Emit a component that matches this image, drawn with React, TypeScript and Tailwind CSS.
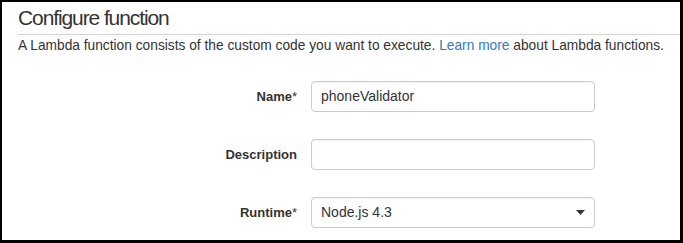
const fields = [
  { label: "Name", required: true, value: "phoneValidator", kind: "input" },
  { label: "Description", required: false, value: "", kind: "input" },
  { label: "Runtime", required: true, value: "Node.js 4.3", kind: "select" },
];

function Caret() {
  return (
    <svg width="9" height="5" viewBox="0 0 9 5" className="shrink-0">
      <path d="M0 0h9L4.5 5z" fill="#333" />
    </svg>
  );
}

export default function App() {
  return (
    <div className="h-[243px] w-[683px] bg-black pt-[2px] pl-[2px] pr-[3px] pb-[3px] font-['Liberation_Sans',Arial,sans-serif] text-[#333]">
      <div className="h-full bg-white pl-[16px]">
        <h1 className="border-b border-[#d5d5d5] pt-[3px] pb-[4px] text-[21px] leading-[25px] font-normal tracking-[-1.1px] text-[#333]">
          Configure function
        </h1>
        <p className="pt-[2px] text-[13.75px] leading-[18px] whitespace-nowrap">
          A Lambda function consists of the custom code you want to execute.{" "}
          <span className="text-[#337ab7]">Learn more</span> about Lambda functions.
        </p>

        <div className="mt-[26px] grid grid-cols-[279px_284px] gap-x-[14px] gap-y-[27px]">
          {fields.map((f) => (
            <div key={f.label} className="contents">
              <div className="flex h-[31px] items-center justify-end text-[13px] font-bold text-[#333]">
                {f.label}
                {f.required && <span className="font-normal">*</span>}
              </div>
              <div className="flex h-[31px] items-center justify-between rounded-[4px] border border-[#ccc] bg-white pl-[9px] pr-[9px] text-[14px] text-[#333] shadow-[inset_0_1px_1px_rgba(0,0,0,0.05)]">
                <span>{f.value}</span>
                {f.kind === "select" && <Caret />}
              </div>
            </div>
          ))}
        </div>
      </div>
    </div>
  );
}
